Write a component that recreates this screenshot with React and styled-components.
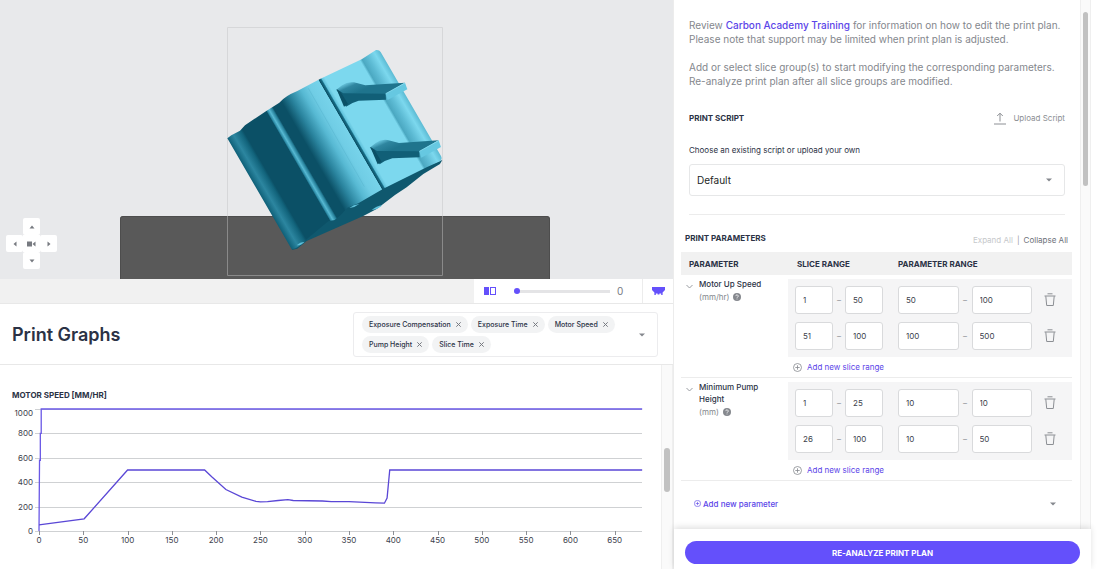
import React, { useState } from "react";
import styled, { createGlobalStyle } from "styled-components";

const GlobalStyle = createGlobalStyle`
  * {
    box-sizing: border-box;
  }
  body {
    margin: 0;
    background: #ffffff;
    color: #2b3245;
    font-family: Inter, "Liberation Sans", sans-serif;
    font-size: 10px;
  }
  button, input, select {
    font-family: inherit;
    font-size: inherit;
    color: inherit;
    margin: 0;
  }
  button {
    border: 0;
    padding: 0;
    background: none;
    cursor: pointer;
  }
  svg {
    display: block;
  }
`;

const Page = styled.div`
  display: grid;
  grid-template-columns: minmax(0, 673fr) minmax(0, 418fr);
  height: 100vh;
  padding-right: 6px;
`;

const LeftColumn = styled.main`
  display: flex;
  flex-direction: column;
  min-height: 0;
`;

/* ---------- model view ---------- */

const Viewer = styled.div`
  position: relative;
  height: 279px;
  flex: none;
  background: #e8e9eb;
`;

const Scene = styled.svg`
  width: 100%;
  height: 100%;
`;

const ViewPad = styled.div`
  position: absolute;
  left: 6px;
  bottom: 10px;
  display: grid;
  grid-template-columns: repeat(3, 17px);
  grid-template-rows: repeat(3, 17px);
`;

const PadButton = styled.button`
  grid-area: ${({ $area }) => $area};
  display: flex;
  align-items: center;
  justify-content: center;
  background: #ffffff;
  border-radius: ${({ $center }) => ($center ? 0 : "2px")};
`;

const ToolStrip = styled.div`
  display: flex;
  justify-content: flex-end;
  height: 25px;
  flex: none;
  background: #f1f1f1;
  border-bottom: 1px solid #e8e8e8;
`;

const Tools = styled.div`
  display: flex;
  align-items: center;
  background: #ffffff;
  width: 168px;
  padding-left: 10px;
  gap: 18px;
`;

const ToolButton = styled.button`
  display: flex;
  align-items: center;
  justify-content: center;
`;

const LastTool = styled(ToolButton)`
  width: 31px;
  background: #ffffff;
  border-left: 1px solid #ececec;
`;

const Slider = styled.input`
  appearance: none;
  width: 96px;
  height: 8px;
  background: linear-gradient(#e4e4e6, #e4e4e6) center / 100% 3px no-repeat;
  &::-webkit-slider-thumb {
    appearance: none;
    width: 6px;
    height: 6px;
    border-radius: 50%;
    background: #6450fb;
  }
`;

const SliderValue = styled.output`
  margin-left: -11px;
  color: #777b82;
  font-size: 10px;
`;

/* ---------- graphs ---------- */

const GraphHeader = styled.header`
  display: flex;
  align-items: center;
  justify-content: space-between;
  flex: none;
  padding: 8px 15px 7px 12px;
  border-bottom: 1px solid #e8e8e8;
`;

const Title = styled.h1`
  margin: 0;
  font-size: 18px;
  line-height: 24px;
  font-weight: 600;
`;

const GraphPicker = styled.div`
  display: flex;
  align-items: center;
  width: 305px;
  padding: 3px 12px 3px 8px;
  border: 1px solid #ececee;
  border-radius: 3px;
`;

const Chips = styled.div`
  display: flex;
  flex-wrap: wrap;
  flex: 1;
  gap: 3px;
`;

const Chip = styled.span`
  display: flex;
  align-items: center;
  gap: 5px;
  height: 17px;
  padding: 0 7px;
  border-radius: 9px;
  background: #f2f3f4;
  font-size: 7px;
  font-weight: 500;
  white-space: nowrap;
`;

const GraphBody = styled.section`
  display: flex;
  flex: 1;
  min-height: 0;
`;

const GraphContent = styled.div`
  flex: 1;
  min-width: 0;
  overflow: hidden;
  padding-top: 24px;
`;

const SectionTitle = styled.h2`
  margin: 0;
  font-size: 8px;
  line-height: 12px;
  font-weight: 700;
`;

const GraphTitle = styled(SectionTitle)`
  margin: 0 12px;
`;

const ChartSvg = styled.svg`
  width: 100%;
  height: auto;
`;

const ScrollTrack = styled.div`
  flex: none;
  width: ${({ $width }) => $width};
  padding: ${({ $top }) => $top} 2px 0;
  background: #fafafa;
  border-left: 1px solid #efefef;
  border-right: 1px solid #efefef;
`;

const ScrollThumb = styled.div`
  height: ${({ $height }) => $height};
  border-radius: 3px;
  background: #c1c1c1;
`;

/* ---------- settings panel ---------- */

const Panel = styled.aside`
  display: flex;
  flex-direction: column;
  min-height: 0;
  border-left: 1px solid #ececec;
`;

const PanelBody = styled.div`
  display: flex;
  flex: 1;
  min-height: 0;
`;

const PanelContent = styled.div`
  flex: 1;
  min-width: 0;
  overflow: hidden;
  padding: 18px 8px 0 7px;
`;

const Padded = styled.div`
  padding: 0 7px 0 8px;
`;

const Intro = styled.p`
  margin: 0 0 14px;
  font-size: 10px;
  line-height: 14px;
  color: #84878d;
`;

const Link = styled.a`
  color: #5b45e8;
  font-weight: 500;
  text-decoration: none;
`;

const SectionHead = styled.div`
  display: flex;
  align-items: center;
  justify-content: space-between;
  padding: ${({ $padding }) => $padding};
`;

const UploadButton = styled.button`
  display: flex;
  align-items: center;
  gap: 7px;
  color: #8c8f94;
  font-size: 8px;
  line-height: 14px;
`;

const FieldLabel = styled.label`
  display: block;
  margin: 19px 0 8px;
  font-size: 8px;
  line-height: 12px;
`;

const SelectWrap = styled.div`
  display: grid;
  align-items: center;
  svg {
    grid-area: 1 / 1;
    justify-self: end;
    margin-right: 13px;
    pointer-events: none;
  }
`;

const Select = styled.select`
  grid-area: 1 / 1;
  appearance: none;
  width: 100%;
  height: 32px;
  padding: 0 7px;
  border: 1px solid #e6e7e8;
  border-radius: 3px;
  background: #ffffff;
  color: #1c1f26;
  font-size: 10px;
`;

const Divider = styled.hr`
  height: 1px;
  margin: 18px 0 0;
  border: 0;
  background: #ececec;
`;

const Toggles = styled.div`
  display: flex;
  gap: 4px;
  padding-top: 5px;
  color: #9a9da2;
  font-size: 8px;
  line-height: 12px;
`;

const ToggleButton = styled.button`
  color: ${({ disabled }) => (disabled ? "#c6c8cb" : "#6d7178")};
`;

const ParamTable = styled.table`
  width: 100%;
  table-layout: fixed;
  border-collapse: collapse;
  thead {
    background: #f1f1f1;
  }
`;

const HeadCell = styled.th`
  width: ${({ $width }) => $width};
  height: 23px;
  padding: 0 0 0 ${({ $indent }) => $indent};
  font-size: 8px;
  font-weight: 700;
  text-align: left;
`;

const NameCell = styled.th`
  padding: 3px 12px 0 5px;
  font-weight: 500;
  font-size: 8px;
  line-height: 12px;
  text-align: left;
  vertical-align: top;
  border-bottom: 1px solid #ececec;
`;

const NameInner = styled.div`
  display: flex;
  align-items: flex-start;
  gap: 6px;
`;

const Chevron = styled.button`
  padding-top: 6px;
`;

const Unit = styled.div`
  display: flex;
  align-items: center;
  gap: 4px;
  padding-top: 1px;
  color: #84878d;
  font-weight: 400;
`;

const RangeCell = styled.td`
  padding: 4px 0 0;
  border-bottom: 1px solid #ececec;
`;

const Ranges = styled.div`
  display: grid;
  gap: 8px;
  padding: 7px 4px 7px 7px;
  background: #f5f5f6;
`;

const RangeRow = styled.div`
  display: grid;
  grid-template-columns: 38px 12px 38px 15px minmax(0, 61fr) 13px minmax(0, 61fr) 36px;
  align-items: center;
  color: #8c8f94;
  text-align: center;
  font-size: 8px;
`;

const NumberInput = styled.input`
  width: 100%;
  height: 28px;
  padding: 0 7px;
  border: 1px solid #d9dadc;
  border-radius: 3px;
  background: #ffffff;
  color: #3c414c;
  font-size: 8px;
`;

const TrashButton = styled.button`
  justify-self: center;
`;

const AddRange = styled.button`
  display: flex;
  align-items: center;
  gap: 5px;
  height: 20px;
  padding-left: 5px;
  color: #5b45e8;
  font-size: 8px;
`;

const AddParameter = styled.button`
  display: flex;
  align-items: center;
  justify-content: space-between;
  width: 100%;
  height: 45px;
  padding: 0 16px 0 13px;
  color: #5b45e8;
  font-size: 8px;
  font-weight: 500;
`;

const WithIcon = styled.span`
  display: flex;
  align-items: center;
  gap: 2px;
`;

const Footer = styled.footer`
  flex: none;
  padding: 12px 11px 5px;
  background: #ffffff;
  box-shadow: 0 -2px 6px rgba(0, 0, 0, 0.12);
`;

const PrimaryButton = styled.button`
  width: 100%;
  height: 23px;
  border-radius: 12px;
  background: #6450fb;
  color: #ffffff;
  font-size: 8px;
  font-weight: 700;
`;

/* ---------- icons ---------- */

const Caret = ({ color = "#85888e" }) => (
  <svg width="6" height="4" viewBox="0 0 6 4">
    <path d="M0 0.5h6L3 3.5z" fill={color} />
  </svg>
);

const arrows = {
  up: "M0.5 4.5h5L3 1.5z",
  down: "M0.5 1.5h5L3 4.5z",
  left: "M4.5 0.5v5L1.5 3z",
  right: "M1.5 0.5v5L4.5 3z",
};

const Arrow = ({ dir }) => (
  <svg width="6" height="6" viewBox="0 0 6 6">
    <path d={arrows[dir]} fill="#777a80" />
  </svg>
);

const CameraIcon = () => (
  <svg width="9" height="6" viewBox="0 0 9 6">
    <path d="M0 0.5h5v5H0zM8.5 0.5v5L5.5 3z" fill="#777a80" />
  </svg>
);

const CloseIcon = () => (
  <svg width="5" height="5" viewBox="0 0 5 5">
    <path d="M0.3 0.3l4.4 4.4M4.7 0.3L0.3 4.7" stroke="#777a80" strokeWidth="1" />
  </svg>
);

const PlusCircle = ({ size = 9, color = "#85888e" }) => (
  <svg width={size} height={size} viewBox="0 0 9 9" fill="none" stroke={color} strokeWidth="0.8">
    <circle cx="4.5" cy="4.5" r="4" />
    <path d="M2.3 4.5h4.4M4.5 2.3v4.4" />
  </svg>
);

const TrashIcon = () => (
  <svg width="12" height="14" viewBox="0 0 12 14" fill="none" stroke="#8c8f94">
    <path d="M3.5 0.8h5M0.5 3h11" />
    <path d="M1.8 3.2l0.9 9.3h6.6l0.9-9.3" />
  </svg>
);

const UploadIcon = () => (
  <svg width="12" height="13" viewBox="0 0 12 13" fill="none" stroke="#8c8f94">
    <path d="M6 9.5V1.2M3.2 4L6 1.2 8.8 4M0 12h12" />
  </svg>
);

const HelpIcon = () => (
  <svg width="8" height="8" viewBox="0 0 8 8">
    <circle cx="4" cy="4" r="4" fill="#85888e" />
    <path d="M2.8 3.1a1.2 1.2 0 1 1 1.8 1c-.4.2-.6.4-.6.8M4 5.6v.8" fill="none" stroke="#fff" strokeWidth="0.8" />
  </svg>
);

const ChevronIcon = () => (
  <svg width="7" height="5" viewBox="0 0 7 5" fill="none" stroke="#9a9da2">
    <path d="M0.5 1l3 3 3-3" />
  </svg>
);

const SplitIcon = () => (
  <svg width="12" height="8" viewBox="0 0 12 8">
    <rect width="5" height="8" fill="#6450fb" />
    <rect x="6.5" y="0.5" width="5" height="7" fill="none" stroke="#6450fb" />
  </svg>
);

const SupportIcon = () => (
  <svg width="13" height="8" viewBox="0 0 13 8">
    <path d="M0 0h13v3L10.6 5.4V8H9.2V6.4H7.4V7.4H5.6V6.4H3.8V8H2.4V5.4L0 3z" fill="#6450fb" />
  </svg>
);

/* ---------- drawing of the part ---------- */

const Rib = ({ shift }) => (
  <g transform={shift}>
    <path d="M378 210L396 196Q412 184 432 187L466 196 585 188 527 222 400 228z" fill="url(#ribTop)" />
    <path d="M380 208L400 220 527 221 528 239 446 242Q424 248 408 260L396 240z" fill="#115f77" />
    <path d="M380 208L392 216 414 252 402 260z" fill="#0b5066" />
    <path d="M527 221L585 188 592 208 533 240z" fill="#66c8e1" />
    <path d="M527 221L585 189" stroke="#93e4f6" strokeWidth="2" />
  </g>
);

const ModelScene = () => (
  <Scene viewBox="0 0 673 279" preserveAspectRatio="xMidYMax slice" role="img" aria-label="Part preview">
    <defs>
      <linearGradient id="body" gradientUnits="userSpaceOnUse" x1="-115" y1="67" x2="342.5" y2="-198.4">
        <stop offset="0" stopColor="#0f6078" />
        <stop offset="0.04" stopColor="#2c86a0" />
        <stop offset="0.085" stopColor="#12647c" />
        <stop offset="0.1" stopColor="#0b5066" />
        <stop offset="0.268" stopColor="#0b5066" />
        <stop offset="0.274" stopColor="#2b89a4" />
        <stop offset="0.286" stopColor="#57b9d3" />
        <stop offset="0.304" stopColor="#26809a" />
        <stop offset="0.312" stopColor="#0b5066" />
        <stop offset="0.37" stopColor="#0b5066" />
        <stop offset="0.43" stopColor="#2a849e" />
        <stop offset="0.5" stopColor="#57b9d3" />
        <stop offset="0.55" stopColor="#70cde5" />
        <stop offset="0.612" stopColor="#77d3ea" />
        <stop offset="0.616" stopColor="#0b5066" />
        <stop offset="0.628" stopColor="#186f88" />
        <stop offset="0.634" stopColor="#62c3dc" />
        <stop offset="0.65" stopColor="#7cd8ee" />
        <stop offset="0.872" stopColor="#7cd8ee" />
        <stop offset="0.885" stopColor="#4ba8c1" />
        <stop offset="0.92" stopColor="#5dbbd4" />
        <stop offset="0.965" stopColor="#7cd8ee" />
        <stop offset="1" stopColor="#5ab9d2" />
      </linearGradient>
      <linearGradient id="ribTop" gradientUnits="userSpaceOnUse" x1="415" y1="184" x2="432" y2="222">
        <stop offset="0" stopColor="#6fcce4" />
        <stop offset="0.4" stopColor="#2f86a0" />
        <stop offset="1" stopColor="#1f748d" />
      </linearGradient>
    </defs>
    <path d="M120 279V219a3 3 0 0 1 3-3H547a3 3 0 0 1 3 3V279z" fill="#595959" />
    <path d="M120.5 279V219a2.5 2.5 0 0 1 2.5-2.5H547a3 3 0 0 1 2.5 2.5V279" fill="none" stroke="#4d4d4d" />
    <path d="M227.5 216V27.5H442.5V216" fill="none" stroke="#d6d7d9" />
    <path d="M227.5 216V275.5H442.5V216" fill="none" stroke="#8a8a8a" />
    <g transform="translate(210 20) scale(0.3333)">
      <path
        d="M245 690L275 640 380 570 520 490 697 420 690 432 640 462 590 502 555 525 500 567 460 588 290 663 262 686z"
        fill="#0f586e"
      />
      <path
        d="M52 355L64 346 90 332 105 316 170 272 208 248Q225 228 262 213L330 177 455 118 498 90Q508 89 512 96L693 408Q698 418 690 424L650 442 520 506 445 550 412 563Q395 585 374 600L355 604 283 664Q265 685 245 688z"
        fill="url(#body)"
      />
      <path d="M295 205L463 500" stroke="#57b5ce" strokeWidth="1.5" />
      <path d="M418 564q12-10 30-12q-12 10-30 12M485 570q14-12 32-14q-12 12-32 14M260 676q10-10 24-11q-10 12-24 11" fill="#5fc0da" />
      <Rib />
      <Rib shift="translate(101 173)" />
    </g>
  </Scene>
);

/* ---------- chart ---------- */

const px = (v) => 39 + v * 0.8857;
const py = (v) => 130 - v * 0.122;
const toPoints = (list) => list.map(([x, y]) => `${px(x)},${py(y)}`).join(" ");

const limitLine = [[0, 0], [0.6, 580], [1.5, 580], [1.5, 800], [2.5, 800], [2.5, 1000], [681, 1000]];
const speedLine = [
  [0, 50], [51, 100], [100, 500], [187, 500], [195, 445], [211, 340], [229, 278],
  [245, 243], [250, 238], [258, 240], [270, 250], [281, 257], [287, 250], [320, 246],
  [330, 241], [350, 240], [380, 231], [390, 228], [393, 270], [396, 500], [681, 500],
];
const xTicks = [0, 50, 100, 150, 200, 250, 300, 350, 400, 450, 500, 550, 600, 650];
const yTicks = [0, 200, 400, 600, 800, 1000];

const SpeedChart = () => (
  <ChartSvg viewBox="0 0 661 160" role="img" aria-label="Motor speed">
    {yTicks.map((v) => (
      <g key={v}>
        <path d={`M35 ${Math.round(py(v)) + 0.5}H642`} stroke="#cfd1d3" />
        <text x="33" y={v === 1000 ? 15 : py(v) + 3} textAnchor="end" fontSize="8" fill="#3c414c">
          {v}
        </text>
      </g>
    ))}
    {xTicks.map((v) => (
      <g key={v}>
        <path d={`M${Math.round(px(v)) + 0.5} 130v4`} stroke="#8c8f94" />
        <text x={px(v)} y="142" textAnchor="middle" fontSize="8" fill="#3c414c">
          {v}
        </text>
      </g>
    ))}
    <polyline points={toPoints(limitLine)} fill="none" stroke="#6a58e6" strokeWidth="1.3" />
    <polyline points={toPoints(speedLine)} fill="none" stroke="#5a47d6" strokeWidth="1.3" />
  </ChartSvg>
);

const graphs = ["Exposure Compensation", "Exposure Time", "Motor Speed", "Pump Height", "Slice Time"];

const parameters = [
  { name: "Motor Up Speed", unit: "mm/hr", ranges: [[1, 50, 50, 100], [51, 100, 100, 500]] },
  { name: "Minimum Pump Height", unit: "mm", ranges: [[1, 25, 10, 10], [26, 100, 10, 50]] },
];

const labels = ["Slice from", "Slice to", "Value from", "Value to"];

const ParameterRow = ({ name, unit, ranges }) => (
  <tr>
    <NameCell scope="row">
      <NameInner>
        <Chevron aria-label={`Collapse ${name}`}>
          <ChevronIcon />
        </Chevron>
        <div>
          {name}
          <Unit>
            ({unit}) <HelpIcon />
          </Unit>
        </div>
      </NameInner>
    </NameCell>
    <RangeCell colSpan={2}>
      <Ranges>
        {ranges.map((range) => (
          <RangeRow key={range.join()}>
            {range.map((value, i) => (
              <React.Fragment key={labels[i]}>
                <NumberInput aria-label={`${name} ${labels[i]}`} defaultValue={value} />
                {i < 3 && <span>{i === 1 ? "" : "–"}</span>}
              </React.Fragment>
            ))}
            <TrashButton aria-label="Delete slice range">
              <TrashIcon />
            </TrashButton>
          </RangeRow>
        ))}
      </Ranges>
      <AddRange>
        <PlusCircle /> Add new slice range
      </AddRange>
    </RangeCell>
  </tr>
);

export default function App() {
  const [slice, setSlice] = useState(0);

  return (
    <>
      <GlobalStyle />
      <Page>
        <LeftColumn>
          <Viewer>
            <ModelScene />
            <ViewPad>
              <PadButton $area="1 / 2" aria-label="Rotate up"><Arrow dir="up" /></PadButton>
              <PadButton $area="2 / 1" aria-label="Rotate left"><Arrow dir="left" /></PadButton>
              <PadButton $area="2 / 2" $center aria-label="Reset camera"><CameraIcon /></PadButton>
              <PadButton $area="2 / 3" aria-label="Rotate right"><Arrow dir="right" /></PadButton>
              <PadButton $area="3 / 2" aria-label="Rotate down"><Arrow dir="down" /></PadButton>
            </ViewPad>
          </Viewer>
          <ToolStrip>
            <Tools>
              <ToolButton aria-label="Split view"><SplitIcon /></ToolButton>
              <Slider
                type="range"
                aria-label="Slice"
                value={slice}
                onChange={(e) => setSlice(e.target.value)}
              />
              <SliderValue>{slice}</SliderValue>
            </Tools>
            <LastTool aria-label="Supports"><SupportIcon /></LastTool>
          </ToolStrip>

          <GraphHeader>
            <Title>Print Graphs</Title>
            <GraphPicker>
              <Chips>
                {graphs.map((graph) => (
                  <Chip key={graph}>
                    {graph}
                    <button aria-label={`Remove ${graph}`}><CloseIcon /></button>
                  </Chip>
                ))}
              </Chips>
              <button aria-label="Choose graphs"><Caret /></button>
            </GraphPicker>
          </GraphHeader>
          <GraphBody>
            <GraphContent>
              <GraphTitle>MOTOR SPEED [MM/HR]</GraphTitle>
              <SpeedChart />
            </GraphContent>
            <ScrollTrack $width="12px" $top="83px">
              <ScrollThumb $height="44px" />
            </ScrollTrack>
          </GraphBody>
        </LeftColumn>

        <Panel>
          <PanelBody>
            <PanelContent>
              <Padded>
                <Intro>
                  Review <Link href="#training">Carbon Academy Training</Link> for information on how to edit the
                  print plan.
                  <br />
                  Please note that support may be limited when print plan is adjusted.
                </Intro>
                <Intro>
                  Add or select slice group(s) to start modifying the corresponding parameters.
                  <br />
                  Re-analyze print plan after all slice groups are modified.
                </Intro>
                <SectionHead $padding="9px 0 0">
                  <SectionTitle>PRINT SCRIPT</SectionTitle>
                  <UploadButton><UploadIcon /> Upload Script</UploadButton>
                </SectionHead>
                <FieldLabel htmlFor="script">Choose an existing script or upload your own</FieldLabel>
                <SelectWrap>
                  <Select id="script" defaultValue="Default">
                    <option>Default</option>
                  </Select>
                  <Caret />
                </SelectWrap>
                <Divider />
              </Padded>
              <SectionHead $padding="14px 4px 6px">
                <SectionTitle>PRINT PARAMETERS</SectionTitle>
                <Toggles>
                  <ToggleButton disabled>Expand All</ToggleButton>|<ToggleButton>Collapse All</ToggleButton>
                </Toggles>
              </SectionHead>
              <ParamTable>
                <thead>
                  <tr>
                    <HeadCell $width="107px" $indent="8px">PARAMETER</HeadCell>
                    <HeadCell $width="101px" $indent="9px">SLICE RANGE</HeadCell>
                    <HeadCell $indent="9px">PARAMETER RANGE</HeadCell>
                  </tr>
                </thead>
                <tbody>
                  {parameters.map((parameter) => (
                    <ParameterRow key={parameter.name} {...parameter} />
                  ))}
                </tbody>
              </ParamTable>
              <AddParameter>
                <WithIcon><PlusCircle size={7} color="#5b45e8" /> Add new parameter</WithIcon>
                <Caret />
              </AddParameter>
            </PanelContent>
            <ScrollTrack $width="11px" $top="12px">
              <ScrollThumb $height="174px" />
            </ScrollTrack>
          </PanelBody>
          <Footer>
            <PrimaryButton>RE-ANALYZE PRINT PLAN</PrimaryButton>
          </Footer>
        </Panel>
      </Page>
    </>
  );
}
